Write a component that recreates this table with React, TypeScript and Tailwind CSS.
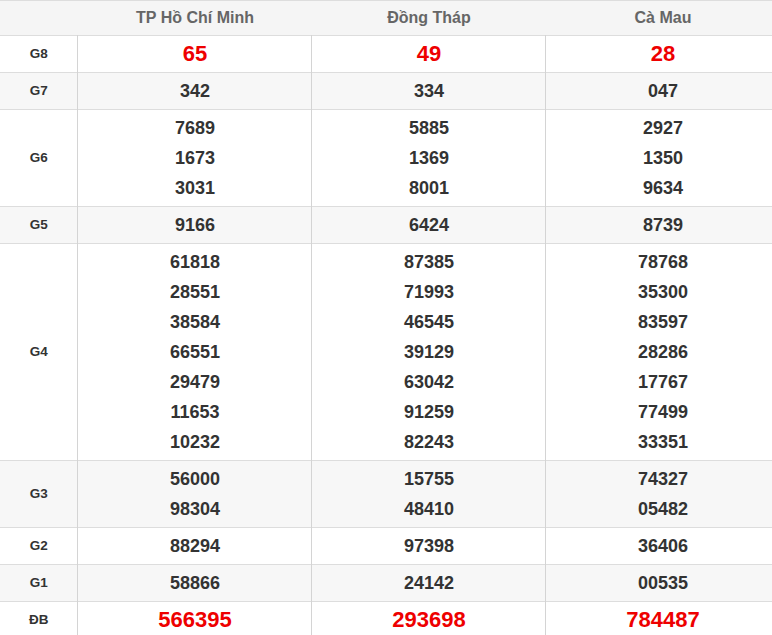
import React from 'react';

interface PrizeRow {
    label: string;
    values: string[][];
    big?: boolean;
}

const provinces = ['TP Hồ Chí Minh', 'Đồng Tháp', 'Cà Mau'];

const rows: PrizeRow[] = [
    { label: 'G8', values: [['65'], ['49'], ['28']], big: true },
    { label: 'G7', values: [['342'], ['334'], ['047']] },
    {
        label: 'G6',
        values: [
            ['7689', '1673', '3031'],
            ['5885', '1369', '8001'],
            ['2927', '1350', '9634'],
        ],
    },
    { label: 'G5', values: [['9166'], ['6424'], ['8739']] },
    {
        label: 'G4',
        values: [
            ['61818', '28551', '38584', '66551', '29479', '11653', '10232'],
            ['87385', '71993', '46545', '39129', '63042', '91259', '82243'],
            ['78768', '35300', '83597', '28286', '17767', '77499', '33351'],
        ],
    },
    { label: 'G3', values: [['56000', '98304'], ['15755', '48410'], ['74327', '05482']] },
    { label: 'G2', values: [['88294'], ['97398'], ['36406']] },
    { label: 'G1', values: [['58866'], ['24142'], ['00535']] },
    { label: 'ĐB', values: [['566395'], ['293698'], ['784487']], big: true },
];

export default function App() {
    return (
        <div className="w-[772px] h-[635px] overflow-hidden bg-white" style={{ fontFamily: '"Liberation Sans", Arial, sans-serif' }}>
            <table className="w-[779px] border-collapse table-fixed">
                <colgroup>
                    <col className="w-[77px]" />
                    <col className="w-[234px]" />
                    <col className="w-[234px]" />
                    <col className="w-[234px]" />
                </colgroup>
                <thead>
                    <tr className="bg-[#f5f5f5] border-t border-b border-[#dddddd]">
                        <th className="h-[35px] p-0"></th>
                        {provinces.map((p) => (
                            <th key={p} className="h-[35px] pl-[2px] pr-0 py-0 text-center text-[16px] font-bold text-[#666666]">
                                {p}
                            </th>
                        ))}
                    </tr>
                </thead>
                <tbody>
                    {rows.map((row, i) => (
                        <tr
                            key={row.label}
                            className={`border-b border-[#dddddd] ${i % 2 === 1 ? 'bg-[#f7f7f7]' : 'bg-white'}`}
                        >
                            <td className="py-[3px] pl-[1px] pr-0 text-center text-[13.5px] font-bold text-[#333333] border-r border-[#d4d4d4]">
                                {row.label}
                            </td>
                            {row.values.map((col, ci) => (
                                <td
                                    key={ci}
                                    className="py-[3px] pl-[2px] pr-0 text-center font-bold border-r border-[#d4d4d4]"
                                >
                                    {col.map((v, vi) => (
                                        <div
                                            key={vi}
                                            className={
                                                row.big
                                                    ? 'leading-[30px] text-[22px] text-[#ee0000]'
                                                    : 'leading-[30px] text-[18px] text-[#333333]'
                                            }
                                        >
                                            {v}
                                        </div>
                                    ))}
                                </td>
                            ))}
                        </tr>
                    ))}
                </tbody>
            </table>
        </div>
    );
}
